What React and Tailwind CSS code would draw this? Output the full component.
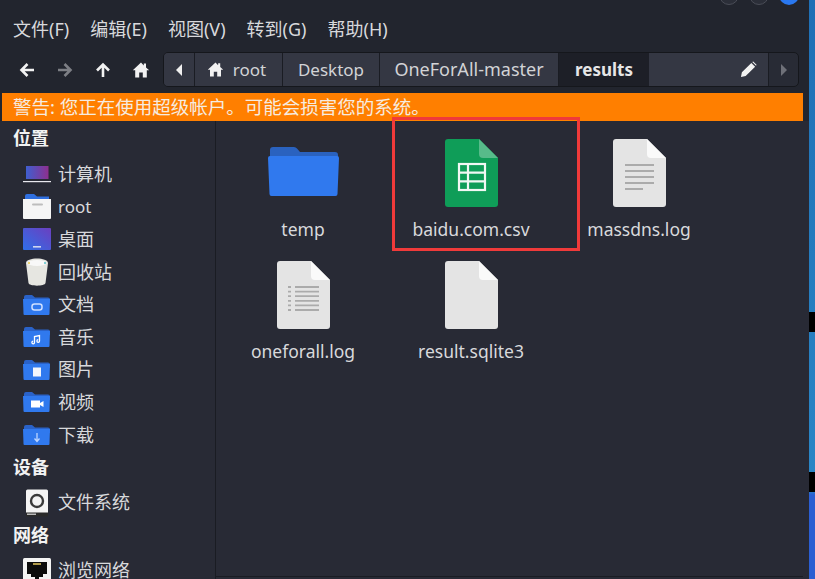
const sans = 'font-["Noto_Sans","Noto_Sans_CJK_SC",sans-serif]';

const menus = ['文件(F)', '编辑(E)', '视图(V)', '转到(G)', '帮助(H)'];

function Arrow({ dir = 'left', dim }) {
  const rot = { left: 'rotate-0', right: 'rotate-180', up: 'rotate-90' }[dir];
  return (
    <svg viewBox="0 0 18 18" className={`w-[18px] h-[18px] ${rot}`}>
      <path
        d="M16 9H4M9.5 3 3.5 9l6 6"
        fill="none"
        stroke={dim ? '#7d7f85' : '#f2f2f2'}
        strokeWidth="2.6"
      />
    </svg>
  );
}

function Home({ size = 18 }) {
  return (
    <svg viewBox="0 0 18 18" width={size} height={size}>
      <path d="M9 1.5 0.8 9.2h2.4V16.5h4V11.5h3.6v5h4V9.2h2.4L14 6.4V2.5h-2.2v1.9z" fill="#f2f2f2" />
    </svg>
  );
}

function FolderSmall({ children }) {
  return (
    <svg viewBox="0 0 27 20" className="w-[27px] h-[20px]">
      <path d="M1 2a2 2 0 0 1 2-2h6l3 2.500h13a2 2 0 0 1 2 2V8H1z" fill="#2a62c8" />
      <path d="M0 4h27l-0.500 15a1 1 0 0 1-1 1H1.500a1 1 0 0 1-1-1z" fill="#3079ee" />
      {children}
    </svg>
  );
}

function SideIcon({ type }) {
  if (type === 'computer') {
    return (
      <svg viewBox="0 0 28 17" className="w-[28px] h-[17px]">
        <defs>
          <linearGradient id="lap" x1="0" x2="1">
            <stop offset="0" stopColor="#3f5fd0" />
            <stop offset="1" stopColor="#8e2f8f" />
          </linearGradient>
        </defs>
        <rect x="3" y="0" width="22.500" height="13" fill="url(#lap)" />
        <rect x="0" y="15" width="28" height="1.200" fill="#e8e8ee" />
      </svg>
    );
  }
  if (type === 'home') {
    return (
      <svg viewBox="0 0 28 25" className="w-[28px] h-[25px]">
        <path d="M2 2a2 2 0 0 1 2-2h7l3 2.500h12V8H2z" fill="#2f6fe0" />
        <path d="M0 5h28v19a1 1 0 0 1-1 1H1a1 1 0 0 1-1-1z" fill="#f5f5f5" />
        <rect x="9" y="9.500" width="11" height="2" rx="1" fill="#bdbdbd" />
      </svg>
    );
  }
  if (type === 'desktop') {
    return (
      <svg viewBox="0 0 28 22" className="w-[28px] h-[22px]">
        <defs>
          <linearGradient id="dsk" x1="0" y1="1" x2="1" y2="0">
            <stop offset="0" stopColor="#2f6fe8" />
            <stop offset="1" stopColor="#6b3fc0" />
          </linearGradient>
        </defs>
        <rect width="28" height="22" rx="1" fill="url(#dsk)" />
        <rect x="10" y="18" width="8" height="1.600" fill="#cfd6f0" />
      </svg>
    );
  }
  if (type === 'trash') {
    return (
      <svg viewBox="0 0 24 28" className="w-[24px] h-[28px] ml-[2px]">
        <path d="M1 5c0-6 22-6 22 0l-2.500 20c-.4 3.500-16.600 3.500-17 0z" fill="#e6e6e1" />
        <ellipse cx="12" cy="5" rx="9.500" ry="3" fill="#f8f8f8" />
        <circle cx="4" cy="5" r="1" fill="#e8c94a" />
        <circle cx="20" cy="5" r="1" fill="#58c0c8" />
      </svg>
    );
  }
  if (type === 'disk') {
    return (
      <svg viewBox="0 0 24 28" className="w-[24px] h-[28px] ml-[2px]">
        <rect x="1" y="0.500" width="22" height="26" rx="1.500" fill="#f4f4f4" />
        <rect x="1" y="23.500" width="22" height="4" fill="#2a2a2a" />
        <rect x="2" y="24.500" width="9" height="1.500" fill="#bbbbbb" />
        <circle cx="12" cy="12" r="6" fill="none" stroke="#3a3a3a" strokeWidth="2.400" />
      </svg>
    );
  }
  if (type === 'network') {
    return (
      <svg viewBox="0 0 28 24" className="w-[28px] h-[24px]">
        <rect width="28" height="24" rx="1.500" fill="#f4f4f4" />
        <path d="M4 4h20v12h-4v3h-4v2h-4v-2H8v-3H4z" fill="#0c0c0c" />
        <rect x="10" y="5" width="8" height="2" fill="#b09a4a" />
      </svg>
    );
  }
  const glyphs = {
    docs: <rect x="9" y="9" width="10" height="6" rx="2.500" fill="none" stroke="#cfe0ff" strokeWidth="1.500" />,
    music: <path d="M11.500 15.500v-6l5-1v5.500M11.500 15.500a1.300 1.300 0 1 1-1.300-1.300M16.500 14a1.300 1.300 0 1 1-1.300-1.300" fill="none" stroke="#fff" strokeWidth="1.300" />,
    pictures: <rect x="10" y="7.500" width="8" height="9" fill="#f2f5fc" />,
    videos: <path d="M8 8.500h9v7H8zM17 11l3.500-2v6L17 13z" fill="#fff" />,
    downloads: <path d="M14 8v7.500M11.500 13.500l2.500 3 2.500-3" fill="none" stroke="#bcd4ff" strokeWidth="1.300" />,
  };
  return <FolderSmall>{glyphs[type]}</FolderSmall>;
}

const places = [
  ['computer', '计算机'],
  ['home', 'root', true],
  ['desktop', '桌面'],
  ['trash', '回收站'],
  ['docs', '文档'],
  ['music', '音乐'],
  ['pictures', '图片'],
  ['videos', '视频'],
  ['downloads', '下载'],
];

function SideHeading({ children, className = 'mb-[2px]' }) {
  return <div className={`h-[33px] pl-[13px] flex items-center text-[18px] font-bold text-[#f2f2f2] ${className}`}>{children}</div>;
}

function SideRow({ icon, label, latin }) {
  return (
    <div className={`h-[32.6px] flex items-center text-[#d8d9dc] ${latin ? 'text-[17px]' : 'text-[18px]'}`}>
      <div className="w-[58px] pl-[23px] shrink-0 flex justify-start">
        <SideIcon type={icon} />
      </div>
      <span>{label}</span>
    </div>
  );
}

function FileIcon({ kind }) {
  if (kind === 'folder') {
    return (
      <svg viewBox="0 0 73 52" className="w-[73px] h-[52px] -mt-[5px]">
        <path d="M3 5a3 3 0 0 1 3-3h21a4 4 0 0 1 3 1.500L33 7h35a3 3 0 0 1 3 3v6H3z" fill="#2a62bf" />
        <path d="M3 11h67a2 2 0 0 1 2 2l-1.500 36a2 2 0 0 1-2 2H4.500a2 2 0 0 1-2-2L1 13a2 2 0 0 1 2-2z" fill="#3079ee" />
      </svg>
    );
  }
  const body = kind === 'csv' ? '#0f9d58' : '#e4e4e4';
  const fold = kind === 'csv' ? '#57bb8a' : '#fafafa';
  return (
    <svg viewBox="0 0 53 68" className="w-[53px] h-[68px]">
      <path d="M3 0h31l19 19v46a3 3 0 0 1-3 3H3a3 3 0 0 1-3-3V3a3 3 0 0 1 3-3z" fill={body} />
      <path d="M34 0l19 19H38a4 4 0 0 1-4-4z" fill={fold} />
      {kind === 'csv' && (
        <g fill="none" stroke="#f1f8f4" strokeWidth="2.200">
          <rect x="14" y="25" width="26" height="26" />
          <path d="M14 33.700h26M14 42.300h26M23 25v26" />
        </g>
      )}
      {kind === 'text' && (
        <g stroke="#ababab" strokeWidth="1.800">
          <path d="M12 26h29M12 32h29M12 38h29M12 44h29M12 50h18" />
        </g>
      )}
      {kind === 'list' && (
        <g stroke="#ababab" strokeWidth="1.800">
          <path d="M18 26h24M18 30.600h24M18 35.200h24M18 39.800h24M18 44.400h24M18 49h24" />
          <path d="M11 26h3M11 30.600h3M11 35.200h3M11 39.800h3M11 44.400h3M11 49h3" />
        </g>
      )}
    </svg>
  );
}

const files = [
  ['folder', 'temp'],
  ['csv', 'baidu.com.csv'],
  ['text', 'massdns.log'],
  ['list', 'oneforall.log'],
  ['blank', 'result.sqlite3'],
];

function Crumb({ children, className = '' }) {
  return (
    <div className={`h-full flex items-center justify-center border-r border-[#1a1c23] bg-[#343743] text-[#d2d3d6] ${className}`}>
      {children}
    </div>
  );
}

export default function App() {
  return (
    <div className={`w-[815px] h-[579px] overflow-hidden flex bg-[linear-gradient(#1f6fb5,#2a86c6_490px,#2b5ed2_495px,#2b5ed2)] ${sans}`}>
      <div className="relative w-[809px] h-full shrink-0 flex flex-col bg-[#22252e]">
        {/* window buttons, cut off by the crop */}
        <div className="h-[5px] overflow-hidden flex justify-end items-end gap-[10px] pr-[10px] shrink-0">
          <div className="w-5 h-5 shrink-0 rounded-full border border-[#4a4d57] bg-[#2b2e38]" />
          <div className="w-5 h-5 shrink-0 rounded-full border border-[#4a4d57] bg-[#2b2e38]" />
          <div className="w-5 h-5 shrink-0 rounded-full bg-[#2a78f0]" />
        </div>

        <div className="h-[47px] shrink-0 flex items-center gap-[21px] pl-[13px] pt-[1px] text-[18px] text-[#d8d9dc]">
          {menus.map((m) => (
            <span key={m}>{m}</span>
          ))}
        </div>

        <div className="h-[35px] shrink-0 flex items-center">
          <div className="w-[163px] shrink-0 flex items-center pl-[18px] gap-[20px]">
            <Arrow dir="left" />
            <Arrow dir="right" dim />
            <Arrow dir="up" />
            <Home />
          </div>
          <div className="w-[636px] h-full flex rounded-[5px] overflow-hidden border border-[#15171c] bg-[#282b35] text-[17px]">
            <Crumb className="w-[31px]">
              <div className="w-0 h-0 border-y-[6px] border-y-transparent border-r-[6px] border-r-[#f0f0f0]" />
            </Crumb>
            <Crumb className="w-[88px] gap-[9px] pr-[4px]">
              <Home size={17} />
              <span>root</span>
            </Crumb>
            <Crumb className="w-[97px]">Desktop</Crumb>
            <Crumb className="w-[179px] text-[18px]">OneForAll-master</Crumb>
            <div className="w-[90px] h-full flex items-center justify-center bg-[#1d1f27] font-bold text-[17px] text-[#e6e6e6]">results</div>
            <Crumb className="w-[120px] justify-end pr-[11px]">
              <svg viewBox="0 0 18 18" className="w-[17px] h-[17px]">
                <path d="M1 17l1-5L12 2l4 4L6 16zM13 1l1-.500 3.500 3.500-.500 1z" fill="#f2f2f2" />
              </svg>
            </Crumb>
            <div className="flex-1 flex items-center justify-center">
              <div className="w-0 h-0 border-y-[6px] border-y-transparent border-l-[6px] border-l-[#6e7078]" />
            </div>
          </div>
        </div>

        <div className="shrink-0 mt-[6px] mx-[2px] w-[801px] h-[28px] bg-[#ff7f00] flex items-center pl-[11px] text-[18.500px] text-[#f6ece0]">
          警告: 您正在使用超级帐户。可能会损害您的系统。
        </div>

        <div className="flex-1 flex min-h-0 bg-[#282a35]">
          <div className="w-[216px] shrink-0 border-r border-[#1a1c23] pt-[1px] overflow-hidden">
            <SideHeading className="mb-[3px]">位置</SideHeading>
            {places.map(([icon, label, latin]) => (
              <SideRow key={label} icon={icon} label={label} latin={latin} />
            ))}
            <SideHeading>设备</SideHeading>
            <SideRow icon="disk" label="文件系统" />
            <SideHeading>网络</SideHeading>
            <SideRow icon="network" label="浏览网络" />
          </div>

          <div className="flex-1 relative pl-[3px] pt-[18px] mb-[2px] mr-[6px] border-b border-[#1a1c23]">
            <div className="grid grid-cols-[168px_168px_168px] auto-rows-[122px]">
              {files.map(([kind, name]) => (
                <div key={name} className="flex flex-col items-center">
                  <div className="h-[68px] flex items-center">
                    <FileIcon kind={kind} />
                  </div>
                  <div className="mt-[10px] text-[17.500px] leading-[24px] text-[#d8d9dc]">{name}</div>
                </div>
              ))}
            </div>
            {/* red annotation box drawn over the screenshot */}
            <div className="absolute left-[176px] top-[-4px] w-[188px] h-[134px] border-[3px] border-[#f03a3a]" />
          </div>
        </div>

        <div className="absolute right-[-6px] top-[312px] w-[6px] h-[20px] bg-black" />
        <div className="absolute right-[-6px] top-[472px] w-[6px] h-[20px] bg-black" />
      </div>
    </div>
  );
}
